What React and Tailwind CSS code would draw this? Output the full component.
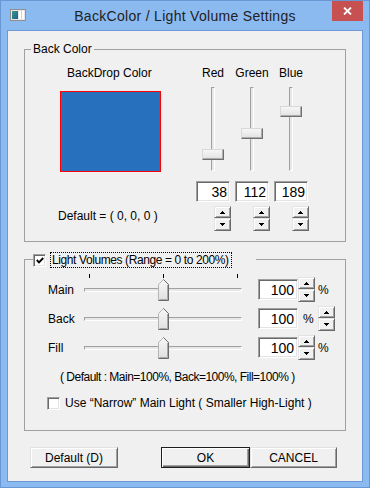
import React from "react";

const txt = "text-[12px] leading-[14px] whitespace-nowrap";
const sunken =
  "bg-white border border-t-[#a0a0a0] border-l-[#a0a0a0] border-r-white border-b-white shadow-[inset_1px_1px_0_#696969,inset_-1px_-1px_0_#e3e3e3]";
const raised =
  "bg-[#f0f0f0] border border-t-[#e3e3e3] border-l-[#e3e3e3] border-r-[#696969] border-b-[#696969] shadow-[inset_1px_1px_0_#ffffff,inset_-1px_-1px_0_#a0a0a0]";

function AppIcon() {
  return (
    <svg width="16" height="12" viewBox="0 0 16 12">
      <defs>
        <linearGradient id="ig" x1="0" y1="0" x2="1" y2="1">
          <stop offset="0" stopColor="#3b9a8c" />
          <stop offset="1" stopColor="#1f5f86" />
        </linearGradient>
      </defs>
      <rect x="0.5" y="0.5" width="15" height="11" fill="#e6e6e6" stroke="#8f8f8f" />
      <rect x="2" y="2" width="6" height="8" fill="url(#ig)" />
      <rect x="9" y="2" width="5" height="8" fill="#ffffff" />
      <rect x="11" y="2" width="1" height="8" fill="#cfcfcf" />
    </svg>
  );
}

function Arrow({ up }) {
  return (
    <svg width="5" height="3" viewBox="0 0 5 3" shapeRendering="crispEdges">
      {up ? (
        <path d="M2 0h1v1h1v1h1v1H0V2h1V1h1z" fill="#000" />
      ) : (
        <path d="M0 0h5v1H4v1H3v1H2V2H1V1H0z" fill="#000" />
      )}
    </svg>
  );
}

function Spin({ className }) {
  return (
    <div className={"flex flex-col w-[17px] " + className}>
      <div className={"h-[12px] flex items-center justify-center " + raised}>
        <Arrow up />
      </div>
      <div className={"h-[13px] flex items-center justify-center " + raised}>
        <Arrow />
      </div>
    </div>
  );
}

function Checkbox({ checked }) {
  return (
    <div className={"w-[13px] h-[13px] shrink-0 flex items-center justify-center " + sunken}>
      {checked && (
        <svg width="8" height="7" viewBox="0 0 8 7">
          <path d="M0.8 3 L3 5.3 L7.2 1" stroke="#000" strokeWidth="1.9" fill="none" />
        </svg>
      )}
    </div>
  );
}

function VSlider({ value }) {
  // thumb centre runs from 165 (0) up to 93 (255)
  const top = Math.round(72.8 - value * 0.2848);
  return (
    <div className="relative mt-[7px] w-[22px] h-[84px] flex justify-center">
      <div className="w-[4px] h-full bg-[#e7e7e7] border border-t-[#a0a0a0] border-l-[#a0a0a0] border-r-white border-b-white" />
      <div
        className="absolute left-0 w-[22px] h-[11px] bg-gradient-to-b from-[#f6f6f6] to-[#e2e2e2] border border-t-[#d8d8d8] border-l-[#d8d8d8] border-r-[#6f6f6f] border-b-[#6f6f6f] shadow-[inset_-1px_-1px_0_#acacac]"
        style={{ top }}
      />
    </div>
  );
}

function HThumb() {
  return (
    <svg width="11" height="22" viewBox="0 0 11 22">
      <defs>
        <linearGradient id="tg" x1="0" y1="0" x2="0" y2="1">
          <stop offset="0" stopColor="#f7f7f7" />
          <stop offset="1" stopColor="#e0e0e0" />
        </linearGradient>
      </defs>
      <path d="M0.5 21.5V5.5L5.5 0.5L10.5 5.5V21.5Z" fill="url(#tg)" stroke="#b4b4b4" />
      <path d="M5.5 0.5L10.5 5.5V21.5H0.5" stroke="#6a6a6a" fill="none" />
      <path d="M9.5 6V20.5H1.5" stroke="#a8a8a8" fill="none" />
    </svg>
  );
}

function HSlider({ value, ticks }) {
  const left = Math.round(0.74 * value - 0.2);
  return (
    <div className="relative w-[158px] h-[29px] flex items-center">
      <div className="w-full h-[4px] bg-[#e7e7e7] border border-t-[#a0a0a0] border-l-[#a0a0a0] border-r-white border-b-white" />
      {ticks && (
        <>
          <div className="absolute top-[-1px] left-[5px] w-[1px] h-[4px] bg-black" />
          <div className="absolute top-[-1px] left-[79px] w-[1px] h-[4px] bg-black" />
          <div className="absolute top-[-1px] left-[153px] w-[1px] h-[4px] bg-black" />
        </>
      )}
      <div className="absolute top-[4px] flex" style={{ left }}>
        <HThumb />
      </div>
    </div>
  );
}

function Btn({ children, className, primary }) {
  const look = primary
    ? "bg-[#f0f0f0] border border-[#1e1e1e] shadow-[inset_1px_1px_0_#ffffff,inset_-1px_-1px_0_#696969,inset_-2px_-2px_0_#a0a0a0]"
    : raised;
  return (
    <div className={"h-[21px] flex items-center justify-center " + txt + " " + look + " " + className}>
      {children}
    </div>
  );
}

export default function App() {
  const rgb = [
    { label: "Red", value: 38 },
    { label: "Green", value: 112 },
    { label: "Blue", value: 189 },
  ];
  const volumes = [
    { label: "Main", value: 100, ticks: true, spinFirst: true },
    { label: "Back", value: 100, ticks: false, spinFirst: false },
    { label: "Fill", value: 100, ticks: false, spinFirst: true },
  ];

  return (
    <div className="w-[370px] h-[488px] flex flex-col bg-[#8bbaf1] border border-[#6a97d4] font-['Liberation_Sans',Arial,sans-serif] text-black select-none">
      {/* title bar */}
      <div className="h-[29px] shrink-0 flex items-start">
        <div className="w-[37px] shrink-0 pl-[9px] pt-[8px] flex">
          <AppIcon />
        </div>
        <div className="flex-1 text-center pt-[7px] text-[14px] leading-[17px] tracking-[0.3px] text-[#222222] whitespace-nowrap">
          BackColor / Light Volume Settings
        </div>
        <div className="w-[37px] shrink-0 pr-[6px]">
          <div className="w-[31px] h-[20px] bg-[#c75050] flex items-center justify-center">
            <svg width="9" height="8" viewBox="0 0 9 8">
              <path d="M1 0.5L8 7.5M8 0.5L1 7.5" stroke="#ffffff" strokeWidth="1.8" />
            </svg>
          </div>
        </div>
      </div>

      {/* client area */}
      <div className="flex-1 mx-[6px] mb-[5px] border border-[#6c98d6] bg-[#f0f0f0] px-[16px] pt-[18px]">
        {/* Back Color group */}
        <div className="h-[193px] border border-[#a0a0a0]">
          <div className={"-mt-[8px] ml-[6px] w-fit px-[2px] bg-[#f0f0f0] " + txt}>Back Color</div>
          <div className="flex items-start mt-[10px]">
            <div className="ml-[33px] w-[103px] flex flex-col items-start">
              <div className={"ml-[9px] " + txt}>BackDrop Color</div>
              <div className="mt-[11px] ml-[2px] w-[101px] h-[81px] border border-[#ff0000] bg-[#2670bd]" />
              <div className={"mt-[37px] " + txt}>Default = ( 0, 0, 0 )</div>
            </div>
            <div className="ml-[35px] flex gap-[5px]">
              {rgb.map((c) => (
                <div key={c.label} className="w-[34px] flex flex-col items-center">
                  <div className={txt}>{c.label}</div>
                  <VSlider value={c.value} />
                  <div className={"mt-[10px] w-[34px] h-[21px] flex items-center justify-end pr-[2px] text-[14px] leading-[16px] " + sunken}>
                    {c.value}
                  </div>
                  <Spin className="mt-[4px] self-start ml-[18px]" />
                </div>
              ))}
            </div>
          </div>
        </div>

        {/* Light Volumes group */}
        <div className="mt-[17px] h-[172px] border border-[#a0a0a0]">
          <div className="-mt-[8px] ml-[8px] w-[223px] h-[16px] flex items-center bg-[#f0f0f0]">
            <Checkbox checked />
            <div className={"ml-[4px] w-[182px] h-[16px] pl-[1px] flex items-center border border-dotted border-black tracking-[-0.4px] " + txt}>
              Light Volumes (Range = 0 to 200%)
            </div>
          </div>

          <div className="mt-[7px]">
            {volumes.map((v) => (
              <div key={v.label} className="h-[29px] pl-[23px] flex items-center">
                <div className={"w-[36px] " + txt}>{v.label}</div>
                <HSlider value={v.value} ticks={v.ticks} />
                <div className={"ml-[16px] w-[40px] h-[21px] flex items-center justify-end pr-[3px] text-[14px] leading-[16px] " + sunken}>
                  {v.value}
                </div>
                {v.spinFirst ? (
                  <>
                    <Spin className="" />
                    <div className={"ml-[3px] " + txt}>%</div>
                  </>
                ) : (
                  <>
                    <div className={"ml-[5px] w-[15px] " + txt}>%</div>
                    <Spin className="" />
                  </>
                )}
              </div>
            ))}
          </div>

          <div className={"mt-[8px] ml-[35px] tracking-[-0.5px] " + txt}>
            ( Default : Main=100%, Back=100%, Fill=100% )
          </div>

          <div className="mt-[12px] ml-[22px] h-[14px] flex items-center">
            <Checkbox />
            <div className={"ml-[5px] " + txt}>Use “Narrow” Main Light ( Smaller High-Light )</div>
          </div>
        </div>

        {/* buttons */}
        <div className="mt-[16px] flex">
          <Btn className="ml-[6px] w-[88px]">Default (D)</Btn>
          <Btn primary className="ml-[43px] w-[89px]">OK</Btn>
          <Btn className="w-[87px]">CANCEL</Btn>
        </div>
      </div>
    </div>
  );
}
